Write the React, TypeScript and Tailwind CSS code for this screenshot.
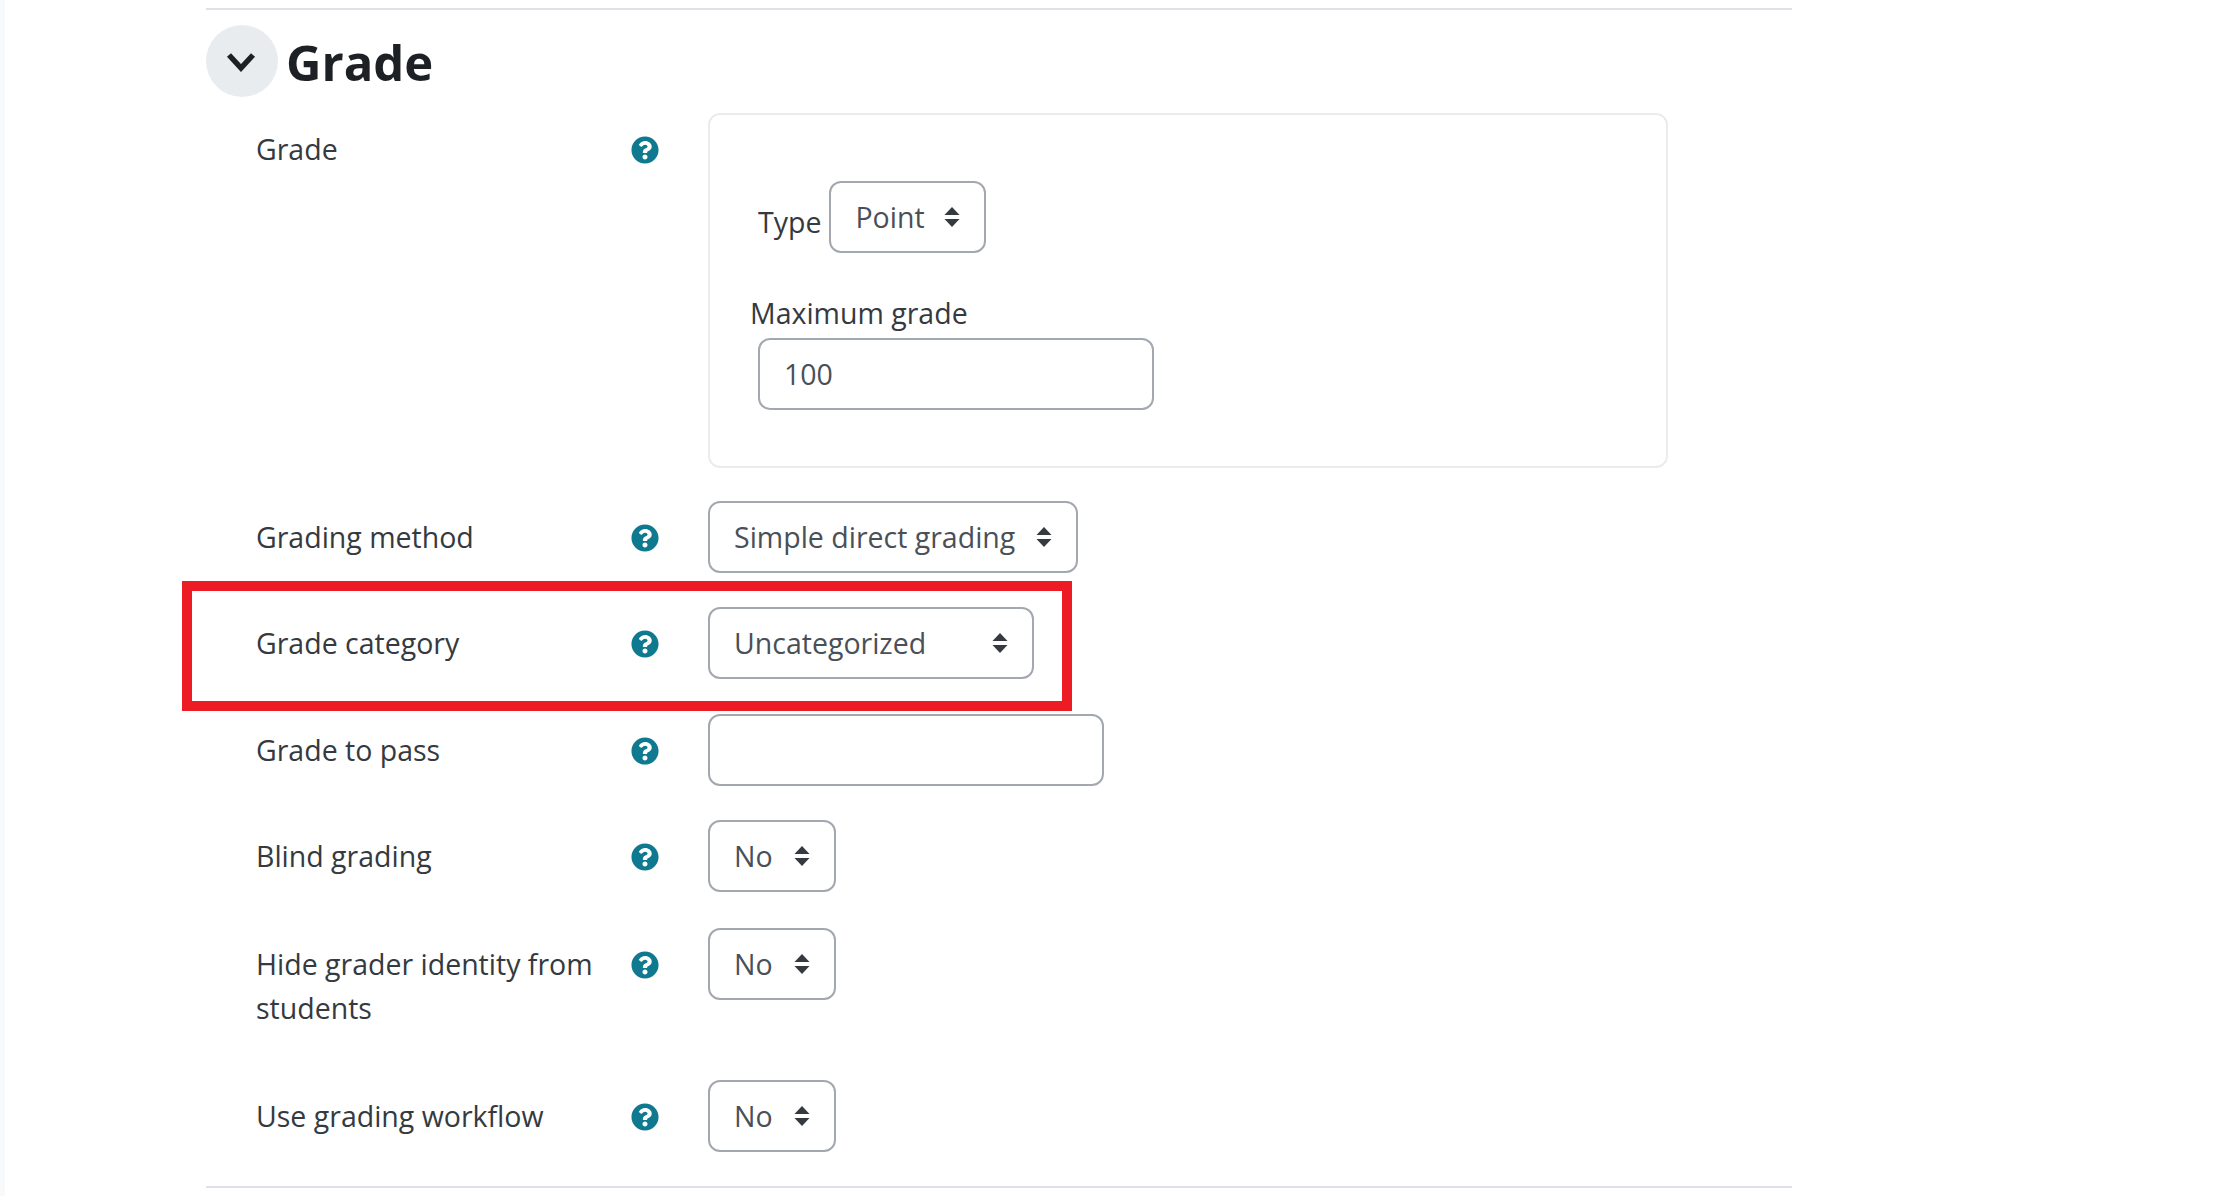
import { FaQuestionCircle } from "react-icons/fa";

function Help() {
  return <FaQuestionCircle className="w-[28px] h-[28px] text-[#0f7a8f]" />;
}

function Caret() {
  return (
    <svg width="16" height="20" viewBox="0 0 16 20" className="shrink-0">
      <path d="M8 0 L15.5 8 H0.5 Z M0.5 12 H15.5 L8 20 Z" fill="#343a40" />
    </svg>
  );
}

function Select({ value, width }: { value: string; width: string }) {
  return (
    <div className={`${width} h-[72px] border-2 border-[#a3a8b0] rounded-[12px] bg-white flex items-center justify-between pl-[24px] pr-[24px] text-[#495057] shrink-0`}>
      <span className="whitespace-nowrap">{value}</span>
      <Caret />
    </div>
  );
}

function Row({ label, children, className }: { label: string; children: React.ReactNode; className: string }) {
  return (
    <div className={`flex ${className}`}>
      <div className="w-[425px] pl-[50px] pr-[16px] pt-[14px] leading-[44px] text-[#343a40] shrink-0">{label}</div>
      <div className="w-[77px] shrink-0 flex pt-[23px]">
        <Help />
      </div>
      {children}
    </div>
  );
}

export default function App() {
  return (
    <div className="relative h-[1196px] w-full bg-white overflow-hidden font-['Open_Sans',sans-serif] text-[28.5px]">
      <div className="flex h-full">
        <div className="w-[5px] bg-[#f8f9fa] shrink-0" />
        <div className="w-[1586px] ml-[201px] shrink-0">
          <div className="mt-[8px] border-t-[2px] border-[#dee2e6]" />
          <div className="mt-[15px] flex items-center h-[72px]">
            <div className="w-[72px] h-[72px] rounded-full bg-[#e9ecef] flex items-center justify-center">
              <svg width="30" height="20" viewBox="0 0 30 20" className="-ml-[3px] mt-[2px]">
                <polyline points="3,3 15,16 27,3" fill="none" stroke="#1d2125" strokeWidth="5.5" />
              </svg>
            </div>
            <h2 className="ml-[8px] mt-[3px] text-[49px] font-bold text-[#1d2125] leading-none">Grade</h2>
          </div>

          <Row label="Grade" className="mt-[16px] mb-[33px]">
            <div className="w-[960px] h-[355px] border-2 border-[#e9ecef] rounded-[12px] pl-[48px] pt-[66px]">
              <div className="flex items-start">
                <span className="pt-[19px] leading-[44px] text-[#343a40] mr-[8px]">Type</span>
                <Select value="Point" width="w-[157px]" />
              </div>
              <div className="-ml-[8px] mt-[38px] leading-[44px] text-[#343a40]">Maximum grade</div>
              <div className="mt-[3px] w-[396px] h-[72px] border-2 border-[#a3a8b0] rounded-[12px] flex items-center pl-[24px] text-[#495057]">100</div>
            </div>
          </Row>

          <Row label="Grading method" className="mb-[34px]">
            <Select value="Simple direct grading" width="w-[370px]" />
          </Row>
          <Row label="Grade category" className="mb-[35px]">
            <Select value="Uncategorized" width="w-[326px]" />
          </Row>
          <Row label="Grade to pass" className="mb-[34px]">
            <div className="w-[396px] h-[72px] border-2 border-[#a3a8b0] rounded-[12px]" />
          </Row>
          <Row label="Blind grading" className="mb-[36px]">
            <Select value="No" width="w-[128px]" />
          </Row>
          <Row label="Hide grader identity from students" className="mb-[50px]">
            <Select value="No" width="w-[128px]" />
          </Row>
          <Row label="Use grading workflow" className="mb-[34px]">
            <Select value="No" width="w-[128px]" />
          </Row>
          <div className="border-t-[2px] border-[#dee2e6]" />
        </div>
      </div>

      {/* red annotation around the grade category row */}
      <div className="absolute left-[182px] top-[581px] w-[890px] h-[130px] border-[10px] border-[#ed1c24]" />
    </div>
  );
}
